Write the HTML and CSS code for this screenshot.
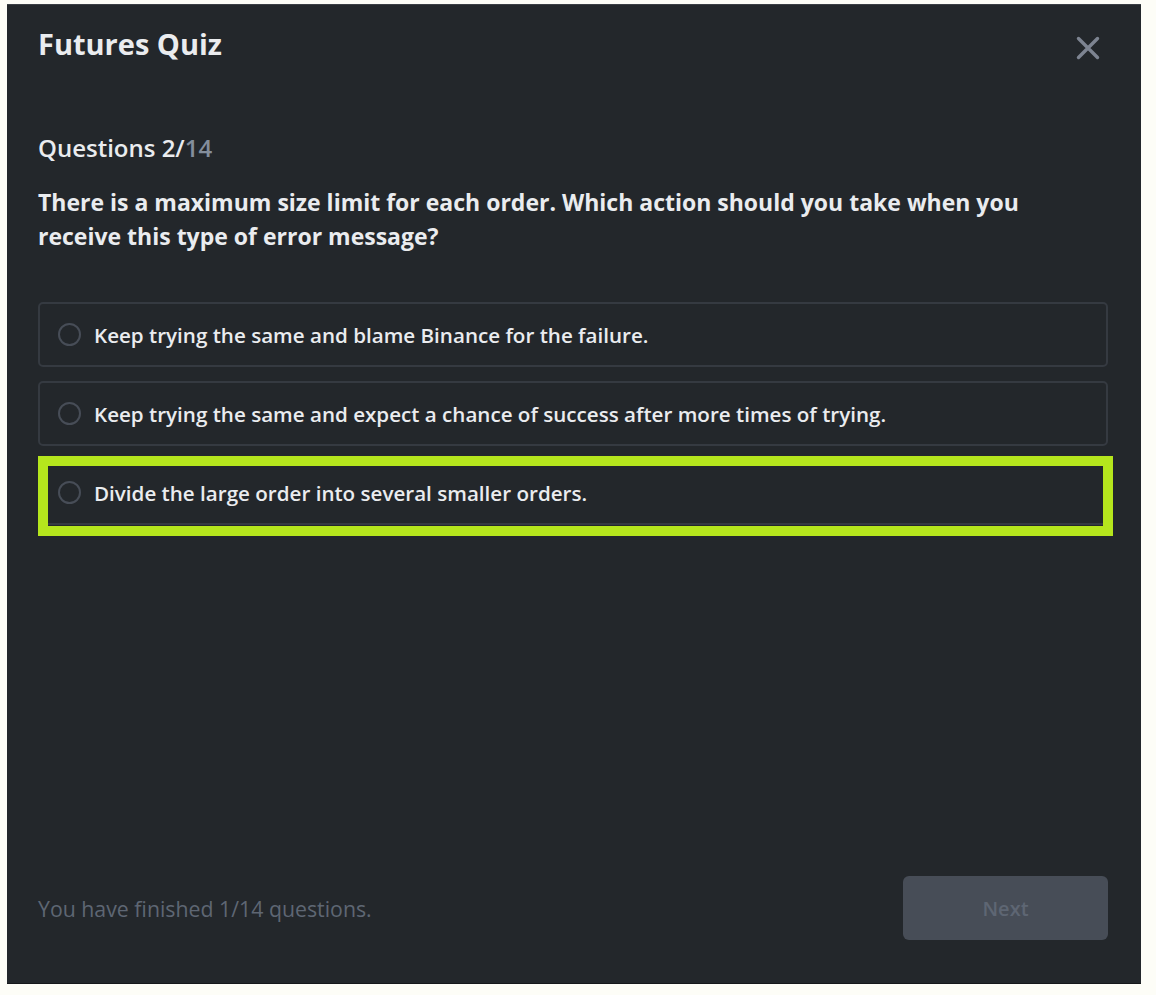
FILE: index.html
```html
<!DOCTYPE html>
<html lang="en">
<head>
<meta charset="utf-8">
<title>Futures Quiz</title>
<link rel="stylesheet" href="styles.css">
</head>
<body>
<div class="modal">
  <header class="head">
    <h1 class="title">Futures Quiz</h1>
    <button class="close" aria-label="Close">
      <svg viewBox="0 0 24 24" width="24" height="24"><path d="M2.5 2.5 L21.5 21.5 M21.5 2.5 L2.5 21.5" stroke="currentColor" stroke-width="3.4" stroke-linecap="round" fill="none"/></svg>
    </button>
  </header>
  <main class="content">
    <div class="progress">Questions 2/<span class="total">14</span></div>
    <p class="question">There is a maximum size limit for each order. Which action should you take when you receive this type of error message?</p>
    <ul class="options">
      <li class="option"><span class="radio"></span><span class="label">Keep trying the same and blame Binance for the failure.</span></li>
      <li class="option"><span class="radio"></span><span class="label">Keep trying the same and expect a chance of success after more times of trying.</span></li>
      <li class="option marked"><span class="radio"></span><span class="label">Divide the large order into several smaller orders.</span><span class="highlight"></span></li>
    </ul>
  </main>
  <footer class="foot">
    <span class="status">You have finished 1/14 questions.</span>
    <button class="next" disabled>Next</button>
  </footer>
</div>
</body>
</html>
```
FILE: styles.css
```css
* { box-sizing: border-box; }
html, body { margin: 0; padding: 0; }
body {
  background: #fdfdf7;
  font-family: "Open Sans", "Liberation Sans", sans-serif;
  width: 1156px;
  height: 995px;
  overflow: hidden;
}
.modal {
  margin: 4px 0 0 7px;
  width: 1134px;
  height: 980px;
  background: #23272b;
  border-top: 1px solid #3a3e44;
  border-bottom: 1px solid #15181b;
  display: flex;
  flex-direction: column;
  padding: 0 33px 0 31px;
}
.head {
  display: flex;
  align-items: center;
  justify-content: space-between;
  padding-top: 19px;
}
.title {
  margin: 0;
  font-size: 29px;
  line-height: 40px;
  font-weight: 700;
  color: #eaecef;
}
.close {
  background: none;
  border: none;
  padding: 0;
  margin: 8px 8px 0 0;
  color: #7d8491;
  width: 24px;
  height: 24px;
  display: flex;
}
.content { flex: 1; }
.progress {
  margin-top: 69px;
  font-size: 24px;
  line-height: 30px;
  font-weight: 600;
  color: #eaecef;
}
.total { color: #848e9c; }
.question {
  margin: 22px 0 0;
  max-width: 1040px;
  font-size: 23px;
  line-height: 34px;
  font-weight: 700;
  color: #eaecef;
}
.options {
  list-style: none;
  margin: 49px 0 0;
  padding: 0;
  display: flex;
  flex-direction: column;
  gap: 14px;
}
.option {
  position: relative;
  height: 65px;
  border: 2px solid #353a41;
  border-radius: 5px;
  display: flex;
  align-items: center;
  padding-left: 18px;
  gap: 13px;
  font-size: 20.6px;
  font-weight: 600;
  color: #eaecef;
}
.radio {
  width: 23px;
  height: 23px;
  border: 2px solid #474d57;
  border-radius: 50%;
  flex: none;
}
.highlight {
  position: absolute;
  left: -2px;
  top: -6px;
  right: -7px;
  bottom: -13px;
  border: 10px solid #b5e61d;
}
.foot {
  display: flex;
  align-items: center;
  justify-content: space-between;
  padding-bottom: 43px;
}
.status {
  font-size: 21.3px;
  color: #5e6673;
}
.next {
  width: 205px;
  height: 64px;
  border: none;
  border-radius: 6px;
  background: #474d57;
  color: #5e6673;
  font-family: inherit;
  font-size: 20px;
  font-weight: 600;
}
```
